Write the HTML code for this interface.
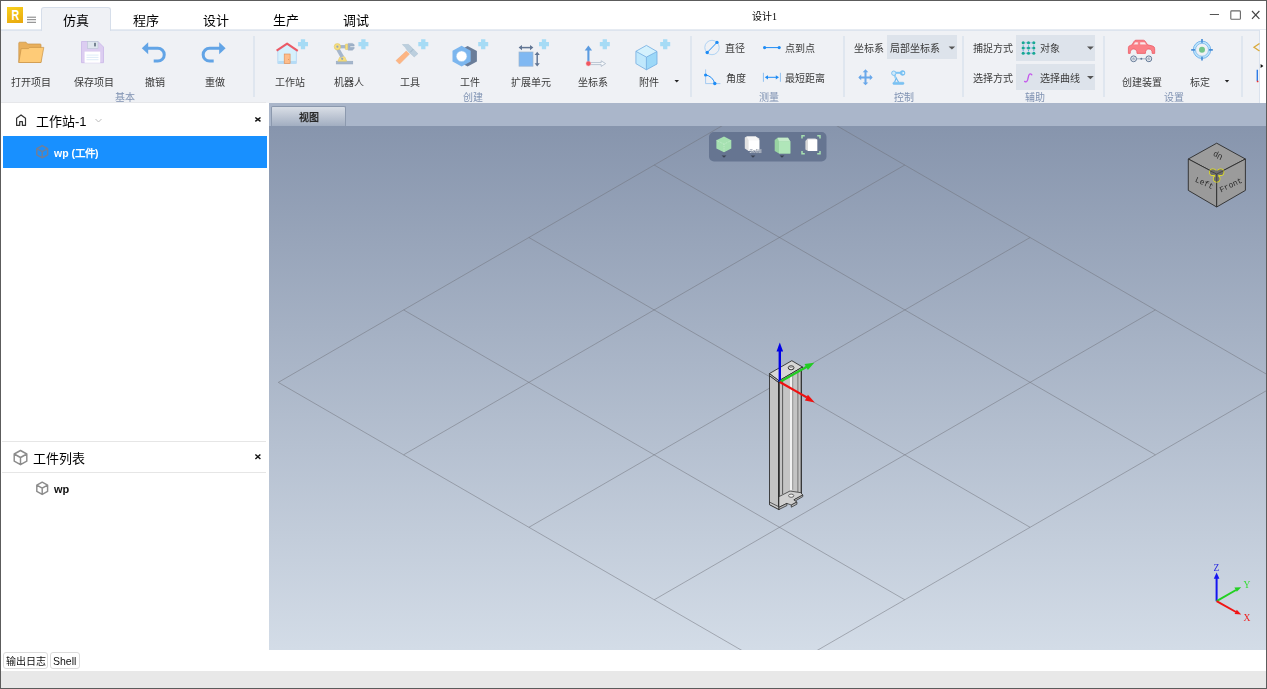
<!DOCTYPE html>
<html lang="zh-CN"><head><meta charset="utf-8">
<style>
*{margin:0;padding:0;box-sizing:border-box}
html,body{width:1267px;height:689px;overflow:hidden;background:#fff;font-family:"Liberation Sans",sans-serif;color:#222}
.a{position:absolute}
.t{position:absolute;white-space:nowrap;line-height:1}
.tab{position:absolute;top:14px;font-size:13px;color:#000;line-height:1;white-space:nowrap}
.l{position:absolute;top:78px;font-size:10px;color:#3a3a3a;white-space:nowrap;line-height:1}
.g{position:absolute;top:93px;font-size:10px;color:#7f92b2;white-space:nowrap;line-height:1}
.s{position:absolute;top:36px;width:2px;height:61px;background:#dfe6ef;margin-left:-1px}
svg{position:absolute;left:0;top:0;overflow:visible}
.t,.l,.g,.tab{will-change:transform}
</style></head><body>
<!-- ribbon background -->
<div class="a" style="left:0;top:29px;width:1267px;height:74px;background:#eff1f5"></div>
<div class="a" style="left:0;top:29px;width:1267px;height:1px;background:#e6ebf2"></div><div class="a" style="left:0;top:30px;width:1267px;height:1px;background:#dde4ee"></div>
<div class="a" style="left:1260px;top:30px;width:7px;height:73px;background:#fff"></div>
<div class="a" style="left:1259px;top:30px;width:1px;height:73px;background:#dae2ed"></div>
<!-- active tab -->
<div class="a" style="left:41px;top:7px;width:70px;height:24px;background:#eff1f5;border:1px solid #d6deea;border-bottom:none;border-radius:3px 3px 0 0"></div>
<div class="tab" style="left:63px">仿真</div>
<div class="tab" style="left:133px">程序</div>
<div class="tab" style="left:203px">设计</div>
<div class="tab" style="left:273px">生产</div>
<div class="tab" style="left:343px">调试</div>
<div class="t" style="left:752px;top:12px;font-size:10px;color:#000;font-weight:500;font-family:'Liberation Serif',serif">设计1</div>
<!-- logo -->
<div class="a" style="left:7px;top:7px;width:16px;height:16px;background:linear-gradient(160deg,#f9d11c,#e8a70e)"></div>
<svg width="30" height="30"><text x="0" y="0" transform="translate(11.6,20.3) scale(0.74,1)" font-family="Liberation Sans" font-weight="bold" font-size="14.5" fill="#fff">R</text></svg>
<svg width="40" height="30"><path d="M27,17.2 H36 M27,19.7 H36 M27,22.3 H36" stroke="#707070" stroke-width="0.9"/></svg>

<!-- ribbon labels -->
<div class="l" style="left:11px">打开项目</div>
<div class="l" style="left:74px">保存项目</div>
<div class="l" style="left:145px">撤销</div>
<div class="l" style="left:205px">重做</div>
<div class="g" style="left:115px">基本</div>
<div class="s" style="left:254px"></div>
<div class="l" style="left:275px">工作站</div>
<div class="l" style="left:334px">机器人</div>
<div class="l" style="left:400px">工具</div>
<div class="l" style="left:460px">工件</div>
<div class="l" style="left:511px">扩展单元</div>
<div class="l" style="left:578px">坐标系</div>
<div class="l" style="left:639px">附件</div>
<div class="g" style="left:463px">创建</div>
<div class="s" style="left:691px"></div>
<div class="l" style="left:725px;top:44px">直径</div>
<div class="l" style="left:785px;top:44px">点到点</div>
<div class="l" style="left:726px;top:74px">角度</div>
<div class="l" style="left:785px;top:74px">最短距离</div>
<div class="g" style="left:759px">测量</div>
<div class="s" style="left:844px"></div>
<div class="l" style="left:854px;top:44px">坐标系</div>
<div class="a" style="left:887px;top:35px;width:70px;height:24px;background:#dde3eb"></div>
<div class="l" style="left:890px;top:44px">局部坐标系</div>
<div class="g" style="left:894px">控制</div>
<div class="s" style="left:963px"></div>
<div class="l" style="left:973px;top:44px">捕捉方式</div>
<div class="a" style="left:1016px;top:35px;width:79px;height:26px;background:#dde3eb"></div>
<div class="l" style="left:1040px;top:44px">对象</div>
<div class="l" style="left:973px;top:74px">选择方式</div>
<div class="a" style="left:1016px;top:64px;width:79px;height:26px;background:#dde3eb"></div>
<div class="l" style="left:1040px;top:74px">选择曲线</div>
<div class="g" style="left:1025px">辅助</div>
<div class="s" style="left:1104px"></div>
<div class="l" style="left:1122px">创建装置</div>
<div class="l" style="left:1190px">标定</div>
<div class="g" style="left:1164px">设置</div>
<div class="s" style="left:1242px"></div>

<svg width="1267" height="689">
  <!-- folder -->
  <path d="M18.8,62.4 V43 Q18.8,42.2 19.6,42.2 H26 L27.6,44 H40.2 Q41,44 41,44.8 V62.4 Z" fill="#e9b05c" stroke="#c99448" stroke-width="0.7"/>
  <path d="M21.2,48.6 H28.6 L29.6,47.4 H43.8 L41,62.5 H18.8 Z" fill="#fecb77" stroke="#c99448" stroke-width="0.7" stroke-linejoin="round"/>
  <!-- floppy -->
  <path d="M81.5,41.5 H98 L103.5,47 V62.7 H81.5 Z" fill="#dccdf1" stroke="#c9b6e7" stroke-width="0.8"/>
  <rect x="87.6" y="41.5" width="10.4" height="6.8" fill="#dfe6ee" stroke="#b9c6d4" stroke-width="0.6"/>
  <rect x="94.2" y="42.8" width="1.6" height="3.6" fill="#5d6b7c"/>
  <rect x="84.6" y="51.6" width="15.6" height="11.2" fill="#fff"/>
  <path d="M86.5,55.1 H98.5 M86.5,57.4 H98.5 M86.5,59.7 H98.5" stroke="#cfe3f5" stroke-width="0.7"/>
  <!-- undo / redo -->
  <g id="undo">
    <path d="M147,48.2 H157.8 A6.45,6.45 0 0 1 157.8,61.1 H153.7" fill="none" stroke="#62a4e6" stroke-width="3"/>
    <path d="M141.8,48.2 L148.2,42.2 V54.2 Z" fill="#62a4e6"/>
  </g>
  <use href="#undo" transform="translate(367.4,0) scale(-1,1)"/>
  <!-- plus signs -->
  <g fill="#a6d6f3">
    <path id="plus" d="M303,39.2 V49.2 M298,44.2 H308" stroke="#a6dbf5" stroke-width="4.3"/>
    <use href="#plus" x="60.4"/>
    <use href="#plus" x="120.3"/>
    <use href="#plus" x="180.2"/>
    <use href="#plus" x="241"/>
    <use href="#plus" x="301.8"/>
    <use href="#plus" x="362.2"/>
  </g>
  <!-- house -->
  <path d="M277.8,63.4 V51 L287.1,44.6 L296.4,51 V63.4 Z" fill="#d6f0fc" stroke="#a9cff0" stroke-width="0.7"/>
  <rect x="278.2" y="61" width="17.8" height="2.6" fill="#b5dcf6"/>
  <path d="M276.6,50.6 L287.1,43.6 L297.8,50.9" fill="none" stroke="#ec5a66" stroke-width="2" stroke-linejoin="round"/>
  <rect x="284.2" y="54" width="5.9" height="9.6" fill="#fdbd8b" stroke="#df8a4f" stroke-width="0.6"/>
  <circle cx="288.6" cy="59.4" r="0.45" fill="#c06a30"/>
  <!-- robot -->
  <rect x="336.2" y="61.2" width="16.6" height="2.8" fill="#a5b6cc" stroke="#93a6be" stroke-width="0.5"/>
  <path d="M337.9,61.2 L339.6,57.4 Q340.2,56.2 341.6,56.2 H343 Q344.4,56.2 345,57.4 L346.7,61.2 Z" fill="#f6de7e" stroke="#dcc25c" stroke-width="0.5"/>
  <path d="M342.3,57 L337.6,48.6" stroke="#a5b6cc" stroke-width="3.6"/>
  <circle cx="342.2" cy="58.8" r="1.1" fill="#93a6be"/>
  <path d="M339,46.7 H346" stroke="#a5b6cc" stroke-width="3.3"/>
  <circle cx="337.4" cy="46.7" r="3.2" fill="#f6de7e" stroke="#dcc25c" stroke-width="0.5"/>
  <circle cx="337.4" cy="46.7" r="1.1" fill="#93a6be"/>
  <rect x="345.3" y="44.1" width="2.8" height="5.4" rx="0.6" fill="#f6de7e" stroke="#dcc25c" stroke-width="0.5"/>
  <path d="M348.1,43.4 H352.4 L354.2,44.6 V46 H350 V47.2 H354.2 V48.6 L352.4,50.2 H348.1 Z" fill="#9fb1c8" stroke="#8fa2bb" stroke-width="0.4"/>
  <!-- hammer -->
  <path d="M396,60.6 L406.3,50.9 L409.5,54.1 L399.5,64.1 Z" fill="#fdb583" stroke="#eea06c" stroke-width="0.4"/>
  <path d="M402.4,44.6 L408.6,44.4 L414.2,50 L417.9,53.7 L414.2,56.9 L407.4,50.6 Q405.6,47 402.4,44.6 Z" fill="#bccfde" stroke="#a6bccf" stroke-width="0.5" stroke-linejoin="round"/>
  <path d="M410.2,52.4 L413.2,49.2" stroke="#9fb5c9" stroke-width="1"/>
  <!-- nut -->
  <path d="M467.6,46 L476.9,51 V61.6 L467.6,66.6 L458.3,61.6 V51 Z" fill="#6a7d99"/>
  <path d="M461.6,45.8 L470.7,50.8 V61.6 L461.6,66.6 L452.5,61.6 V50.8 Z" fill="#7cb6ee"/>
  <circle cx="461.6" cy="56.2" r="5.3" fill="#fff" stroke="#9cc8f0" stroke-width="0.5"/>
  <!-- expand unit -->
  <rect x="519" y="52" width="14" height="14.2" fill="#80b8f2" stroke="#9fb6cf" stroke-width="0.7"/>
  <path d="M521,47.6 H531" stroke="#627694" stroke-width="1.5"/>
  <path d="M518.6,47.6 L522,45 V50.2 Z M533.4,47.6 L530,45 V50.2 Z" fill="#627694"/>
  <path d="M537.2,54 V64" stroke="#627694" stroke-width="1.5"/>
  <path d="M537.2,51.8 L534.6,55 H539.8 Z M537.2,66.4 L534.6,63.2 H539.8 Z" fill="#627694"/>
  <!-- coord -->
  <path d="M588.4,63 V49" stroke="#5b9be0" stroke-width="2.1"/>
  <path d="M588.4,45.6 L584.7,50.6 H592.1 Z" fill="#5b9be0"/>
  <path d="M589,62.6 H601.2 V60.8 L605.6,63.6 L601.2,66.4 V64.6 H589 Z" fill="#f5f8fb" stroke="#a9b7c6" stroke-width="0.8"/>
  <circle cx="588.4" cy="63.6" r="2.4" fill="#f2565f" stroke="#f7a0a5" stroke-width="0.4"/>
  <!-- cube -->
  <path d="M646.4,45.4 L657,51.5 V64 L646.4,69.8 L635.9,63.6 V51.3 Z" fill="#c0e8fc"/>
  <path d="M646.4,57.1 L657,51.5 V64 L646.4,69.8 Z" fill="#9cd8f8"/>
  <path d="M635.9,51.3 L646.4,45.4 L657,51.5 L646.4,57.1 Z" fill="#d4f1fd"/>
  <path d="M646.4,45.4 L657,51.5 V64 L646.4,69.8 L635.9,63.6 V51.3 Z M635.9,51.3 L646.4,57.1 L657,51.5 M646.4,57.1 V69.8" fill="none" stroke="#72ace0" stroke-width="0.8" stroke-linejoin="round"/>
  <path d="M674.5,80 L679,80 L676.75,82.4 Z" fill="#222"/>
  <!-- measure -->
  <circle cx="712" cy="47.5" r="7.2" fill="none" stroke="#a8cff3" stroke-width="0.9"/>
  <path d="M707.2,52.5 L717,42.4" stroke="#1e8cf5" stroke-width="1"/>
  <circle cx="707.2" cy="52.5" r="1.7" fill="#1e8cf5"/>
  <circle cx="717" cy="42.4" r="1.7" fill="#1e8cf5"/>
  <path d="M764.6,47.6 H779.2" stroke="#1e8cf5" stroke-width="1"/>
  <circle cx="764.6" cy="47.6" r="1.6" fill="#1e8cf5"/>
  <circle cx="779.2" cy="47.6" r="1.6" fill="#1e8cf5"/>
  <path d="M705.6,69.4 V83.6 H720.4" fill="none" stroke="#8fc0f0" stroke-width="0.8"/>
  <path d="M705.6,75 Q712.5,76 714.8,83.5" fill="none" stroke="#1e8cf5" stroke-width="1"/>
  <circle cx="705.6" cy="75" r="1.6" fill="#1e8cf5"/>
  <circle cx="714.8" cy="83.5" r="1.7" fill="#1e8cf5"/>
  <path d="M763.4,72.8 V81.8 M780.4,72.8 V81.8" stroke="#8fc0f0" stroke-width="1"/>
  <path d="M767,77.3 H777" stroke="#1e8cf5" stroke-width="1"/>
  <path d="M764.8,77.3 L768,75.2 V79.4 Z M779,77.3 L775.8,75.2 V79.4 Z" fill="#1e8cf5"/>
  <!-- control -->
  <path d="M955.2,46.4 H948.6 L951.9,49.4 Z" fill="#555"/>
  <g transform="translate(0.9,0)">
    <path d="M864.6,71.4 V83.4 M858.6,77.4 H870.6" stroke="#6aa8ea" stroke-width="2"/>
    <path d="M864.6,69.3 L861.8,72.2 H867.4 Z M864.6,85.2 L861.8,82.4 H867.4 Z M857.4,77.4 L860.3,74.6 V80.2 Z M871.8,77.4 L868.9,74.6 V80.2 Z" fill="#6aa8ea"/>
  </g>
  <g>
    <rect x="892.8" y="82.2" width="11.2" height="2.2" rx="1" fill="#7cc4f4" stroke="#5fb0ee" stroke-width="0.4"/>
    <path d="M894.6,82.2 L896.2,78 L894,73.6 M896.2,78 L898.6,82.2" fill="none" stroke="#6ab8f0" stroke-width="1.1"/>
    <path d="M895.6,78.2 L893.8,73.6" stroke="#9ad2f6" stroke-width="1.8"/>
    <circle cx="893.8" cy="73.2" r="2.2" fill="#cfeafb" stroke="#6ab8f0" stroke-width="0.8"/>
    <path d="M895.8,72.8 H900.6" stroke="#7cc4f4" stroke-width="2"/>
    <circle cx="902.6" cy="73" r="2.4" fill="#7cc4f4" stroke="#5fb0ee" stroke-width="0.5"/>
    <circle cx="903.2" cy="73" r="0.9" fill="#eef7fd"/>
  </g>
  <!-- snap grid -->
  <g stroke="#3d8ee6" stroke-width="0.8" stroke-dasharray="1.2,1.2">
    <path d="M1023.2,42.8 H1033.8 M1023.2,48 H1033.8 M1023.2,53.2 H1033.8 M1023.2,42.8 V53.2 M1028.5,42.8 V53.2 M1033.8,42.8 V53.2"/>
  </g>
  <g fill="#17a893">
    <circle cx="1023.2" cy="42.8" r="1.55"/><circle cx="1028.5" cy="42.8" r="1.55"/><circle cx="1033.8" cy="42.8" r="1.55"/>
    <circle cx="1023.2" cy="48" r="1.55"/><circle cx="1028.5" cy="48" r="1.55"/><circle cx="1033.8" cy="48" r="1.55"/>
    <circle cx="1023.2" cy="53.2" r="1.55"/><circle cx="1028.5" cy="53.2" r="1.55"/><circle cx="1033.8" cy="53.2" r="1.55"/>
  </g>
  <path d="M1093.8,46.4 H1087 L1090.4,49.7 Z M1093.8,76 H1087 L1090.4,79.3 Z" fill="#555"/>
  <path d="M1031.8,74.8 Q1030,72.8 1028.8,75.2 L1027.6,80 Q1026.6,82.8 1024.6,81.4" fill="none" stroke="#c558ec" stroke-width="1.3" stroke-linecap="round"/>
  <!-- car -->
  <path d="M1128.4,53.4 V47.6 Q1128.4,45.8 1130.4,45.4 L1131.8,45 L1134.2,41.2 Q1134.8,40.2 1136,40.2 H1143.4 Q1144.4,40.2 1145,41 L1147.6,44.8 L1152.6,46 Q1154.7,46.6 1154.7,48.8 V53.4 H1152.2 Q1152.2,49 1148.8,49 Q1145.4,49 1145.4,53.4 H1137 Q1137,49 1133.6,49 Q1130.2,49 1130.2,53.4 Z" fill="#fb8087" stroke="#e9505b" stroke-width="0.7" stroke-linejoin="round"/>
  <path d="M1133.2,44.7 L1135.2,42.1 H1138.2 V44.7 Z M1139.9,44.7 V42.1 H1144.8 L1146.6,44.7 Z" fill="#fde8ea" stroke="#ef6c75" stroke-width="0.4"/>
  <g fill="none" stroke="#5f7694">
    <circle cx="1133.6" cy="58.8" r="2.9" stroke-width="1"/>
    <circle cx="1148.8" cy="58.8" r="2.9" stroke-width="1"/>
    <circle cx="1133.6" cy="58.8" r="1.2" stroke-width="0.4"/>
    <circle cx="1148.8" cy="58.8" r="1.2" stroke-width="0.4"/>
    <path d="M1136.5,58.8 H1145.9" stroke-width="0.8" stroke="#8ea0b8"/>
  </g>
  <circle cx="1141.3" cy="58.8" r="1" fill="#5f7694"/>
  <circle cx="1133.6" cy="58.8" r="0.5" fill="#5f7694"/><circle cx="1148.8" cy="58.8" r="0.5" fill="#5f7694"/>
  <!-- target -->
  <circle cx="1202" cy="49.8" r="7.6" fill="none" stroke="#bde6fc" stroke-width="2"/>
  <circle cx="1202" cy="49.8" r="8.7" fill="none" stroke="#5ea6e8" stroke-width="0.8"/>
  <circle cx="1202" cy="49.8" r="6.5" fill="none" stroke="#6aaeea" stroke-width="0.7"/>
  <circle cx="1202" cy="49.8" r="3" fill="#74c58b"/>
  <path d="M1202,39 V42.8 M1202,56.8 V60.6 M1191.2,49.8 H1195 M1209,49.8 H1212.8" stroke="#4a8fd6" stroke-width="1.7"/>
  <path d="M1229.2,80 H1224.8 L1227,82.4 Z" fill="#222"/>
  <!-- partial right icons -->
  <path d="M1259.5,43.5 L1254,47.3 L1259.5,51" fill="none" stroke="#d9a93a" stroke-width="1.3"/>
  <path d="M1257.3,69.8 V81" stroke="#2d7be6" stroke-width="1.4"/>
  <circle cx="1257.6" cy="81.4" r="0.9" fill="#e33"/>
  <path d="M1260.6,64 L1263.4,66 L1260.6,68 Z" fill="#111"/>
  <!-- window controls -->
  <path d="M1209.8,14.5 H1219" stroke="#555" stroke-width="1"/>
  <rect x="1230.8" y="10.9" width="9.6" height="8.3" rx="0.8" fill="none" stroke="#666" stroke-width="1.1"/>
  <path d="M1252,11 L1259.4,18.8 M1259.4,11 L1252,18.8" stroke="#444" stroke-width="1.15"/>
</svg>

<!-- left panel -->
<div class="a" style="left:0;top:103px;width:269px;height:547px;background:#fff"></div>
<div class="a" style="left:0;top:102px;width:266px;height:1px;background:#e6e7ea"></div>
<div class="t" style="left:36px;top:115px;font-size:13px;color:#000">工作站-1</div>
<div class="a" style="left:3px;top:136px;width:264px;height:32px;background:#1890ff"></div>
<div class="t" style="left:54px;top:148px;font-size:10.5px;font-weight:bold;color:#fff">wp (工件)</div>
<div class="a" style="left:2px;top:441px;width:264px;height:1px;background:#e6e6e6"></div>
<div class="t" style="left:33px;top:452px;font-size:13px;color:#000">工件列表</div>
<div class="a" style="left:2px;top:472px;width:264px;height:1px;background:#e6e6e6"></div>
<div class="t" style="left:54px;top:484px;font-size:11px;font-weight:bold;color:#111">wp</div>
<svg width="1267" height="689" style="pointer-events:none">
  <!-- home icon -->
  <path d="M16.6,125.4 V118.2 L21.05,114.9 L25.5,118.2 V125.4 H22.4 V121.6 H19.7 V125.4 Z" fill="none" stroke="#333" stroke-width="1.2" stroke-linejoin="round"/>
  <!-- chevron -->
  <path d="M95.5,119 L98.5,122 L101.5,119" fill="none" stroke="#bbb" stroke-width="1"/>
  <!-- close x -->
  <path d="M255.3,117.5 L260.5,121.3 M260.5,117.5 L255.3,121.3" stroke="#111" stroke-width="1.5"/>
  <path d="M255.4,454.5 L260.4,459.1 M260.4,454.5 L255.4,459.1" stroke="#111" stroke-width="1.4"/>
  <!-- cube icons -->
  <g fill="none" stroke="#6f7f99" stroke-width="1.5" stroke-linejoin="round">
    <path d="M42.2,145.6 L47.6,148.6 V154.8 L42.2,157.8 L36.8,154.8 V148.6 Z M36.8,148.6 L42.2,151.6 L47.6,148.6 M42.2,151.6 V157.8"/>
  </g>
  <g fill="none" stroke="#8c8c8c" stroke-width="1.45" stroke-linejoin="round">
    <path d="M20.5,450.5 L26.8,454 V461.2 L20.5,464.7 L14.2,461.2 V454 Z M14.2,454 L20.5,457.5 L26.8,454 M20.5,457.5 V464.7"/>
    <path d="M42.2,482.2 L47.6,485.2 V491.4 L42.2,494.4 L36.8,491.4 V485.2 Z M36.8,485.2 L42.2,488.2 L47.6,485.2 M42.2,488.2 V494.4"/>
  </g>
</svg>
<!-- bottom -->
<div class="a" style="left:0;top:650px;width:1267px;height:21px;background:#fff"></div>
<div class="a" style="left:3px;top:652px;width:45px;height:17px;border:1px solid #dcdcdc;border-radius:3px;background:#fff"></div>
<div class="t" style="left:6px;top:657px;font-size:10px;color:#111">输出日志</div>
<div class="a" style="left:50px;top:652px;width:30px;height:17px;border:1px solid #dcdcdc;border-radius:3px;background:#fff"></div>
<div class="t" style="left:52.5px;top:656px;font-size:10.5px;color:#111">Shell</div>
<div class="a" style="left:0;top:671px;width:1267px;height:18px;background:#e8e8e8"></div>

<!-- viewport -->
<div class="a" style="left:269px;top:103px;width:998px;height:23px;background:#aab6ca"></div>
<div class="a" style="left:271px;top:106px;width:75px;height:20px;background:linear-gradient(#d9dee6,#a2aec1);border:1px solid #8c99ae;border-bottom:none;border-radius:2px 2px 0 0"></div>
<div class="t" style="left:299px;top:113px;font-size:10px;font-weight:bold;color:#2a2a2a">视图</div>
<div class="a" style="left:269px;top:126px;width:998px;height:524px;background:linear-gradient(#8795ad,#d3dce7)"></div>
<svg width="1267" height="689">
  <defs><clipPath id="vc"><rect x="269" y="126" width="997" height="524"/></clipPath></defs>
  <g clip-path="url(#vc)" stroke="#6e7178" stroke-opacity="0.55" stroke-width="0.9" fill="none">
    <path d="M278.3,382.4 L779.5,92.6 M403.6,454.8 L904.8,165.0 M528.9,527.3 L1030.1,237.5 M654.2,599.8 L1155.4,309.9 M779.5,672.2 L1280.7,382.4"/>
    <path d="M278.3,382.4 L779.5,672.2 M403.6,309.9 L904.8,599.8 M528.9,237.5 L1030.1,527.3 M654.2,165.0 L1155.4,454.8 M779.5,92.6 L1280.7,382.4"/>
  </g>
  <!-- view toolbar -->
  <rect x="709" y="132" width="117.5" height="29.5" rx="5" fill="#667591"/>
  <!-- view icons -->
  <g>
    <path d="M724,136.4 L731.3,140.2 V148.4 L724,152.2 L716.4,148.4 V140.2 Z" fill="#a6e1b1"/>
    <path d="M724,144.2 V152 M716.6,140.4 L724,144.2 L731.1,140.4" fill="none" stroke="#d6f3da" stroke-width="0.6" stroke-dasharray="0.9,0.9"/>
    <path d="M721.6,155.6 H726.4 L724,157.8 Z M750.6,155.6 H755.4 L753,157.8 Z M779.6,155.6 H784.4 L782,157.8 Z" fill="#3a4252"/>
    <path d="M744.8,137.6 L746.6,136.4 H755.8 L759.3,138.4 V151 H748.6 L744.8,148.6 Z" fill="#e2e2e2"/>
    <path d="M746.6,136.4 H755.8 L759.3,140.2 H748.6 Z" fill="#f6f6f6"/>
    <rect x="748.6" y="140.2" width="10.7" height="10.8" fill="#fff"/>
    <text x="749.4" y="152.6" font-family="Liberation Sans" font-size="5" font-weight="bold" fill="#e8ecf2" stroke="#7d8796" stroke-width="0.25">Solid</text>
    <path d="M774.7,140 L777.6,137.8 H788 L790.3,141.5 V153.5 H779 L774.7,151 Z" fill="#98d3a2"/>
    <path d="M777.6,137.8 H788 L790.3,141.5 H779 Z" fill="#c4ebca"/>
    <rect x="779" y="141.5" width="11.3" height="12" fill="#b0e6b9"/>
    <path d="M802,138.6 V135.8 H804.8 M817.2,135.8 H820 V138.6 M820,151 V153.8 H817.2 M804.8,153.8 H802 V151" fill="none" stroke="#a6e0b0" stroke-width="1.5"/>
    <path d="M805.4,141 L807.4,138.8 H815.4 L817.2,139.6 V151 H808 L805.4,149.6 Z" fill="#d9d9d9"/>
    <path d="M807.4,138.8 H815.4 L817.2,139.6 H808 Z" fill="#f2f2f2"/>
    <rect x="808" y="139.6" width="9.2" height="11.4" fill="#fff"/>
  </g>
  <g transform="translate(0.3,0.4)"><!-- model -->
  <g stroke="#1e1e1e" stroke-width="0.8" stroke-linejoin="round">
    <path d="M769.2,375 L778.7,382.2 V509.1 L769.2,504.2 Z" fill="#c4c4c4"/>
    <path d="M778.7,382.2 L801,369 V494.6 L778.7,507 Z" fill="#c4c4c4"/>
  </g>
  <path d="M782.3,380 V493.6" stroke="#2a2a2a" stroke-width="0.7"/>
  <path d="M789.7,375.6 V490.6 L792.1,489.4 V374.2 Z" fill="#f2f2f2"/>
  <path d="M792.4,374.2 V489.4" stroke="#555" stroke-width="0.5"/>
  <path d="M797.6,371 V491.6" stroke="#3a3a3a" stroke-width="0.6"/>
  <path d="M801,369 V493.2" stroke="#2a2a2a" stroke-width="0.9"/>
  <g stroke="#1e1e1e" stroke-width="0.8" stroke-linejoin="round">
    <path d="M769.1,373.2 L791.5,360.3 L802.2,366.6 L778.7,380.4 Z" fill="#d6d6d6"/>
    <path d="M769.1,373.2 V375.2 L778.7,382.4 L802.2,368.6 V366.6 L778.7,380.4 Z" fill="#bfbfbf"/>
  </g>
  <ellipse cx="790.8" cy="367.4" rx="2.9" ry="2" fill="#f0f0f0" stroke="#222" stroke-width="0.9"/>
  <path d="M788.9,367.8 Q790.8,365.8 792.7,367.8" fill="none" stroke="#444" stroke-width="0.5"/>
  <path d="M778.6,379.8 V509.1" stroke="#161616" stroke-width="1.1"/>
  <g stroke="#222" stroke-width="0.7" stroke-linejoin="round">
    <path d="M769.2,501.7 L778.6,506.4 V509.1 L769.2,504.2 Z" fill="#cdcdcd"/>
    <path d="M778.6,496.3 L789.7,490.6 L800.5,492.3 L802.5,494.6 L793.6,499.4 L796.6,501.6 L791,504.6 L786.6,503 L778.6,507 Z" fill="#d0d0d0"/>
    <path d="M778.6,507 L786.6,503 V505.2 L778.6,509.1 Z" fill="#bcbcbc"/>
    <path d="M791,504.6 L796.6,501.6 V503.8 L791,506.8 Z" fill="#bcbcbc"/>
    <path d="M793.6,499.4 L802.5,494.6 V496.2 L795.2,500.4 Z" fill="#bcbcbc"/>
  </g>
  <ellipse cx="790.9" cy="495.3" rx="2.6" ry="1.6" fill="#f2f2f2" stroke="#333" stroke-width="0.7"/>
  <!-- gizmo at origin -->
  <path d="M779.5,381.6 V350.5" stroke="#0000e6" stroke-width="2.4"/>
  <path d="M779.5,342.2 L776.2,351.2 H782.8 Z" fill="#0000e6"/>
  <path d="M779.5,381.6 L806.5,366.4" stroke="#22cc22" stroke-width="2.2"/>
  <path d="M814,362.4 L804.2,363.6 L807.6,369.6 Z" fill="#22cc22"/>
  <path d="M779.5,381.6 L806.5,397" stroke="#ee1111" stroke-width="2.2"/>
  <path d="M814.5,402.2 L807.6,394.4 L804.6,400.2 Z" fill="#ee1111"/>
  </g><!-- view cube -->
  <g stroke="#2b2b2b" stroke-width="0.9" stroke-linejoin="round">
    <path d="M1216.7,143.2 L1245.4,159 L1216.7,174 L1188.3,159 Z" fill="#9c9c9c"/>
    <path d="M1188.3,159 L1216.7,174 V207 L1188.3,190.4 Z" fill="#9a9a9a"/>
    <path d="M1245.4,159 L1216.7,174 V207 L1245.4,190.4 Z" fill="#9b9b9b"/>
  </g>
  <g fill="#e6e21e">
    <circle cx="1212.8" cy="172.2" r="3.7"/><circle cx="1220.6" cy="172.2" r="3.7"/><circle cx="1216.7" cy="178.8" r="3.7"/>
  </g>
  <g fill="#6e6e6e">
    <circle cx="1212.8" cy="172.2" r="2.9"/><circle cx="1220.6" cy="172.2" r="2.9"/><circle cx="1216.7" cy="178.8" r="2.9"/>
    <path d="M1212.8,170.5 H1220.6 L1216.7,178.8 Z"/>
  </g>
  <path d="M1209.5,170.6 L1216.7,174 L1224,170.6 M1216.7,174 V182" fill="none" stroke="#333" stroke-width="0.7"/>
  <text x="0" y="0" font-family="Liberation Mono" font-size="8" fill="#2a2a2a" transform="translate(1223,155.6) rotate(-155)">Up</text>
  <text x="0" y="0" font-family="Liberation Mono" font-size="8" fill="#2a2a2a" transform="translate(1194.6,181.4) rotate(24)">Left</text>
  <text x="0" y="0" font-family="Liberation Mono" font-size="8" fill="#2a2a2a" transform="translate(1221,192.4) rotate(-25)">Front</text>
  <!-- corner gizmo -->
  <path d="M1216.6,601.2 V578" stroke="#1515f0" stroke-width="2"/>
  <path d="M1216.6,572.6 L1213.8,578.8 H1219.4 Z" fill="#1515f0"/>
  <path d="M1216.6,601.2 L1236,590" stroke="#22d022" stroke-width="2"/>
  <path d="M1241.2,587.2 L1234.4,587.6 L1236.8,591.8 Z" fill="#22d022"/>
  <path d="M1216.6,601.2 L1236,612" stroke="#f01515" stroke-width="2"/>
  <path d="M1241.2,614.6 L1236.8,609.8 L1234.6,614 Z" fill="#f01515"/>
  <text x="1213.6" y="570.8" font-family="Liberation Serif" font-size="9.5" fill="#2a2ae0">Z</text>
  <text x="1243.4" y="587.8" font-family="Liberation Serif" font-size="9.5" fill="#33dd33">Y</text>
  <text x="1243.4" y="621.4" font-family="Liberation Serif" font-size="9.5" fill="#ee2222">X</text>
</svg>

<!-- window border -->
<div class="a" style="left:0;top:0;width:1267px;height:689px;border:1px solid #5c5c5c"></div>
</body></html>
